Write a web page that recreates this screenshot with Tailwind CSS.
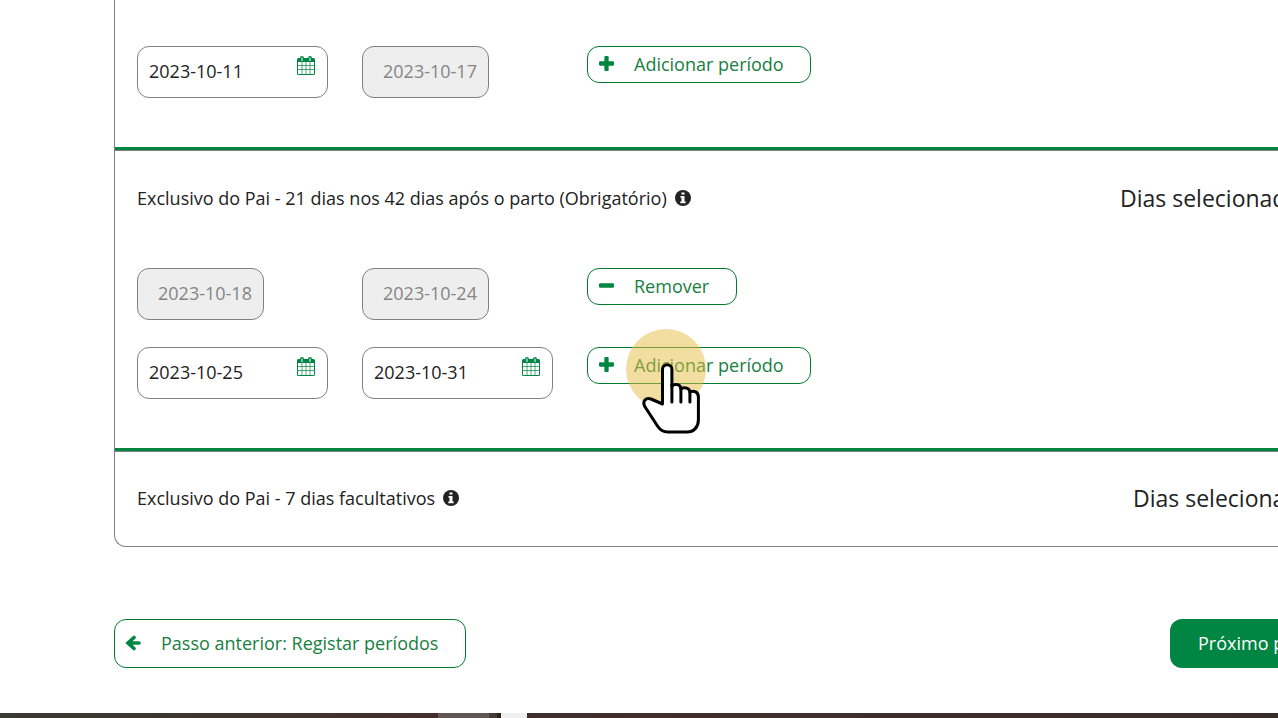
<!DOCTYPE html>
<html lang="pt">
<head>
  <meta charset="UTF-8" />
  <meta name="viewport" content="width=device-width, initial-scale=1" />
  <title>Registar períodos</title>
  <script src="https://cdn.jsdelivr.net/npm/@tailwindcss/browser@4"></script>
</head>
<body class="bg-white font-['Open_Sans',sans-serif] text-lg text-[#222] overflow-x-hidden">
  <!-- icons -->
  <svg class="hidden">
    <symbol id="calendar" viewBox="0 0 18 20">
      <path fill="#fff" d="M1 6h16v12H1z" />
      <path fill="currentColor" fill-rule="evenodd" d="M1.500 2H3q0-2 2-2t2 2h4q0-2 2-2t2 2h1.500Q18 2 18 3.500v14Q18 19 16.500 19h-15Q0 19 0 17.500v-14Q0 2 1.500 2zM4.500 1.500V5h1V1.500zM12.500 1.500V5h1V1.500zM1 6v12h16V6z" />
      <path fill="none" stroke="currentColor" stroke-opacity=".7" d="M5 6v12M9 6v12M13 6v12M1 9.500h16M1 13.500h16" />
    </symbol>
    <symbol id="plus" viewBox="0 0 14 14">
      <path fill="currentColor" d="M6 0h2q1 0 1 1v4h4q1 0 1 1v2q0 1-1 1H9v4q0 1-1 1H6q-1 0-1-1V9H1Q0 9 0 8V6q0-1 1-1h4V1q0-1 1-1z" />
    </symbol>
    <symbol id="minus" viewBox="0 0 14 14">
      <rect y="5" width="14" height="4" rx="1" fill="currentColor" />
    </symbol>
    <symbol id="info" viewBox="0 0 16 16">
      <circle cx="8" cy="8" r="8" fill="#222" />
      <path fill="#fff" d="M6.500 2.500h3v2h-3zM5.500 6h4v5.500h1.200v1.700H5.300v-1.700h1.200V7.700h-1z" />
    </symbol>
  </svg>

  <main class="pl-[114px]">
    <div class="border-l border-b border-[#808080] rounded-bl-xl">
      <section class="pl-[22px] pt-[46px] pb-[49px]">
        <div class="grid grid-cols-[225px_225px_1fr] items-start">
          <div class="flex items-start w-[191px] h-[52px] border border-[#808080] rounded-xl pl-[11px] pr-3">
            <input type="text" aria-label="Data de início" value="2023-10-11" class="min-w-0 flex-1 h-12 outline-none" />
            <button aria-label="Abrir calendário" class="mt-[9px] text-[#008542]"><svg class="w-[18px] h-5"><use href="#calendar" /></svg></button>
          </div>
          <input type="text" aria-label="Data de fim" value="2023-10-17" disabled class="w-[127px] h-[52px] border border-[#808080] rounded-xl pl-5 pb-0.5 bg-[#eee] text-[#858585]" />
          <button class="flex items-center justify-self-start w-56 h-[37px] border border-[#007a2c] rounded-xl pl-[11px] pb-0.5 gap-5 text-[#17803f]">
            <svg class="size-[15px] text-[#008542]"><use href="#plus" /></svg>Adicionar período
          </button>
        </div>
      </section>

      <div class="h-1 bg-[#008542] border-b border-[#808080]"></div>

      <section class="pl-[22px] pt-[33px] pb-[49px]">
        <div class="flex items-center h-7 mb-14">
          <h2>Exclusivo do Pai - 21 dias nos 42 dias após o parto (Obrigatório)</h2>
          <svg class="size-4 ml-2" role="img" aria-label="Informação"><use href="#info" /></svg>
          <p class="ml-auto w-[158px] overflow-hidden whitespace-nowrap text-[23px]/8">Dias selecionados</p>
        </div>
        <div class="grid grid-cols-[225px_225px_1fr] items-start gap-y-[27px]">
          <input type="text" aria-label="Data de início" value="2023-10-18" disabled class="w-[127px] h-[52px] border border-[#808080] rounded-xl pl-5 pb-0.5 bg-[#eee] text-[#858585]" />
          <input type="text" aria-label="Data de fim" value="2023-10-24" disabled class="w-[127px] h-[52px] border border-[#808080] rounded-xl pl-5 pb-0.5 bg-[#eee] text-[#858585]" />
          <button class="flex items-center justify-self-start w-[150px] h-[37px] border border-[#007a2c] rounded-xl pl-[11px] pb-0.5 gap-5 text-[#17803f]">
            <svg class="size-[15px] text-[#008542]"><use href="#minus" /></svg>Remover
          </button>

          <div class="flex items-start w-[191px] h-[52px] border border-[#808080] rounded-xl pl-[11px] pr-3">
            <input type="text" aria-label="Data de início" value="2023-10-25" class="min-w-0 flex-1 h-12 outline-none" />
            <button aria-label="Abrir calendário" class="mt-[9px] text-[#008542]"><svg class="w-[18px] h-5"><use href="#calendar" /></svg></button>
          </div>
          <div class="flex items-start w-[191px] h-[52px] border border-[#808080] rounded-xl pl-[11px] pr-3">
            <input type="text" aria-label="Data de fim" value="2023-10-31" class="min-w-0 flex-1 h-12 outline-none" />
            <button aria-label="Abrir calendário" class="mt-[9px] text-[#008542]"><svg class="w-[18px] h-5"><use href="#calendar" /></svg></button>
          </div>
          <div class="relative justify-self-start">
            <button class="flex items-center w-56 h-[37px] border border-[#007a2c] rounded-xl pl-[11px] pb-0.5 gap-5 text-[#17803f]">
              <svg class="size-[15px] text-[#008542]"><use href="#plus" /></svg>Adicionar período
            </button>
            <!-- click highlight and pointer -->
            <div class="absolute left-[39px] -top-[18px] size-20 rounded-full bg-[#e3bd41]/50 pointer-events-none"></div>
            <svg class="absolute left-[55px] top-4 w-[60px] h-[72px] pointer-events-none" viewBox="0 0 60 72" fill="none" stroke="#000" stroke-width="3" stroke-linecap="round" stroke-linejoin="round">
              <path fill="#fff" d="M20.500 42V7.500a4.700 4.700 0 0 1 9.400 0V24c3-3 9-1.500 9 3 3-2.500 9-1 9 3 4-2 8.500 0 8.500 5v23c0 7-4.500 12-11.500 12H26c-5 0-8-2-10.500-6L2.800 44.500C0 39 4 35 9 37z" transform="translate(0 -1)" />
              <path d="M29.900 22v17M38.900 26v13M47.900 29v10" />
            </svg>
          </div>
        </div>
      </section>

      <div class="h-1 bg-[#008542] border-b border-[#808080]"></div>

      <section class="pl-[22px] pt-8 pb-[34px]">
        <div class="flex items-center h-7">
          <h2>Exclusivo do Pai - 7 dias facultativos</h2>
          <svg class="size-4 ml-2" role="img" aria-label="Informação"><use href="#info" /></svg>
          <p class="ml-auto w-[145px] overflow-hidden whitespace-nowrap text-[23px]/8">Dias selecionados</p>
        </div>
      </section>
    </div>

    <nav class="flex justify-between mt-[72px] mb-[45px]">
      <button class="flex items-center w-[352px] h-[49px] border border-[#007a2c] rounded-xl pl-[10px] pb-0.5 gap-5 text-[#17803f]">
        <svg class="size-4 text-[#008542]" viewBox="0 0 16 16" fill="none" stroke="currentColor" stroke-width="3.600"><path stroke-linecap="round" d="M9 2.500 3 8l6 5.500M4 8h10" /></svg>Passo anterior: Registar períodos
      </button>
      <button class="w-[108px] h-[49px] rounded-l-xl bg-[#008542] pl-7 pb-0.5 overflow-hidden whitespace-nowrap text-left text-white">Próximo passo</button>
    </nav>
  </main>

  <footer class="flex h-[5px] bg-linear-to-r from-[#302d2a] via-[#412e2b] to-[#392d29]">
    <div class="w-[438px] bg-linear-to-r from-[#393a31] to-[#432f2c]"></div>
    <div class="w-[51px] bg-[#625755]"></div>
    <div class="w-3 bg-[#453a36] border-r-4 border-[#30211e]"></div>
    <div class="w-[26px] bg-[#efefef]"></div>
  </footer>
</body>
</html>
